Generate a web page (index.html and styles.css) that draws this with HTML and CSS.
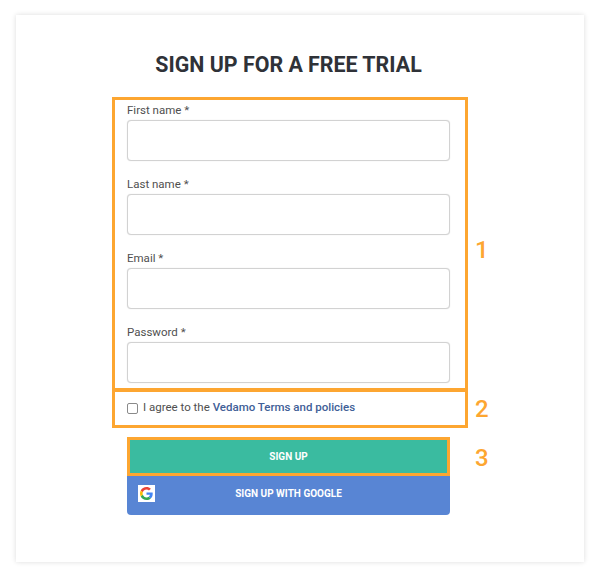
FILE: index.html
```html
<!DOCTYPE html>
<html lang="en">
<head>
<meta charset="utf-8">
<title>Sign up for a free trial</title>
<link rel="stylesheet" href="styles.css">
</head>
<body>
<main class="card">
  <h1 class="title">SIGN UP FOR A FREE TRIAL</h1>
  <form class="form">
    <div class="marked fields">
      <div class="field"><label class="label">First name *</label><input class="input" type="text"></div>
      <div class="field"><label class="label">Last name *</label><input class="input" type="text"></div>
      <div class="field"><label class="label">Email *</label><input class="input" type="email"></div>
      <div class="field"><label class="label">Password *</label><input class="input" type="password"></div>
      <span class="num num-1">1</span>
    </div>
    <div class="marked agree">
      <input class="check" type="checkbox">
      <span class="agree-text">I agree to the <a class="link">Vedamo Terms and policies</a></span>
      <span class="num num-2">2</span>
    </div>
    <div class="buttons">
      <div class="signup-wrap">
        <button class="btn btn-signup" type="button">SIGN UP</button>
        <span class="num num-3">3</span>
      </div>
      <button class="btn btn-google" type="button">
        <span class="g-badge">
          <svg width="13" height="13" viewBox="0 0 48 48" aria-hidden="true">
            <path fill="#EA4335" d="M24 9.500c3.500 0 6.700 1.200 9.200 3.600l6.900-6.900C35.900 2.400 30.500 0 24 0 14.600 0 6.500 5.400 2.600 13.200l8 6.200C12.500 13.700 17.800 9.500 24 9.500z"/>
            <path fill="#4285F4" d="M46.900 24.500c0-1.600-.1-3.100-.4-4.500H24v9h12.900c-.6 3-2.200 5.500-4.700 7.200l7.700 6c4.500-4.200 7-10.300 7-17.700z"/>
            <path fill="#FBBC05" d="M10.500 28.600c-.5-1.500-.8-3-.8-4.600s.3-3.100.8-4.600l-8-6.200C.9 16.500 0 20.100 0 24s.9 7.500 2.600 10.800l7.900-6.200z"/>
            <path fill="#34A853" d="M24 48c6.500 0 11.900-2.100 15.900-5.800l-7.700-6c-2.200 1.400-4.900 2.300-8.200 2.300-6.200 0-11.500-4.200-13.400-9.900l-8 6.200C6.500 42.600 14.600 48 24 48z"/>
          </svg>
        </span>
        SIGN UP WITH GOOGLE
      </button>
    </div>
  </form>
</main>
</body>
</html>
```
FILE: styles.css
```css
* { box-sizing: border-box; }
html, body { margin: 0; padding: 0; background: #fff; }
body { font-family: Roboto, "Liberation Sans", sans-serif; color: #4a4a4a; height: 578px; overflow: hidden; }

.card {
  width: 568px;
  height: 547px;
  margin: 15px 0 0 16px;
  padding-top: 37px;
  background: #fff;
  box-shadow: 0 0 5px rgba(0, 0, 0, 0.14);
  display: flex;
  flex-direction: column;
  align-items: center;
}
.title {
  margin: 0;
  width: 100%;
  padding-right: 23px;
  text-align: center;
  font-size: 21.4px;
  line-height: 25px;
  font-weight: 700;
  color: #2f3238;
}
.form {
  margin-top: 20px;
  margin-left: -20px;
  width: 356px;
  display: flex;
  flex-direction: column;
}
.marked { position: relative; border: 3px solid #fda631; }
.fields {
  height: 294px;
  padding: 3px 15px 0 12px;
  display: flex;
  flex-direction: column;
  gap: 16px;
}
.field { display: flex; flex-direction: column; }
.label { font-size: 11.5px; line-height: 15px; height: 17px; color: #4f4f4f; }
.input {
  height: 41px;
  width: 100%;
  border: 1px solid #d2d2d2;
  border-radius: 4px;
  background: #fff;
  box-shadow: 0 0 1px rgba(0, 0, 0, 0.18);
}
.agree {
  height: 39px;
  margin-top: -2px;
  padding: 0 0 4px 12px;
  display: flex;
  align-items: center;
}
.check {
  width: 11px;
  height: 11px;
  margin: 3px 5px 0 0;
  appearance: none;
  border: 1px solid #8a8a8a;
  border-radius: 2px;
  background: #fff;
}
.agree-text { font-size: 11.5px; color: #4f4f4f; }
.link { font-weight: 500; color: #3f6097; }
.buttons {
  margin: 9px 0 0 15px;
  width: 323px;
  display: flex;
  flex-direction: column;
}
.signup-wrap { position: relative; }
.btn {
  display: block;
  width: 100%;
  border: 0;
  padding: 0;
  font-family: inherit;
  font-size: 10px;
  font-weight: 700;
  color: #fff;
  text-align: center;
}
.btn-signup {
  height: 39px;
  background: #3abba0;
  border: 3px solid #fda631;
}
.btn-google {
  position: relative;
  height: 39px;
  padding-bottom: 4px;
  background: #5885d4;
  border-radius: 0 0 4px 4px;
}
.g-badge {
  position: absolute;
  left: 11px;
  top: 9px;
  width: 17px;
  height: 17px;
  background: #fff;
  display: flex;
  align-items: center;
  justify-content: center;
}
.num {
  position: absolute;
  font-size: 24px;
  line-height: 28px;
  font-weight: 500;
  color: #fda631;
}
.num-1 { left: 360px; top: 136px; }
.num-2 { left: 360px; top: 3px; }
.num-3 { left: 348px; top: 7px; }
```
